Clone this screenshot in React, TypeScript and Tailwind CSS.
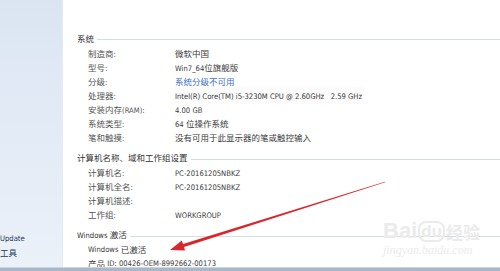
import React from "react";

type Row = { label: string; value?: string; blue?: boolean };

const systemRows: Row[] = [
  { label: "制造商:", value: "微软中国" },
  { label: "型号:", value: "Win7_64位旗舰版" },
  { label: "分级:", value: "系统分级不可用", blue: true },
  { label: "处理器:", value: "Intel(R) Core(TM) i5-3230M CPU @ 2.60GHz   2.59 GHz" },
  { label: "安装内存(RAM):", value: "4.00 GB" },
  { label: "系统类型:", value: "64 位操作系统" },
  { label: "笔和触摸:", value: "没有可用于此显示器的笔或触控输入" },
];

const nameRows: Row[] = [
  { label: "计算机名:", value: "PC-20161205NBKZ" },
  { label: "计算机全名:", value: "PC-20161205NBKZ" },
  { label: "计算机描述:" },
  { label: "工作组:", value: "WORKGROUP" },
];

// latin runs render narrower than the CJK runs in the screenshot
const Txt = ({ text }: { text: string }) => (
  <>
    {text.split(/([\u3000-\u9fff\uff00-\uffef]+)/).map((part, i) =>
      i % 2 === 1 ? (
        <span key={i} className="text-[8.5px]">{part}</span>
      ) : (
        <span
          key={i}
          className="text-[7.6px]"
          style={{ fontFamily: '"Liberation Sans Narrow", "DejaVu Sans Condensed", "Liberation Sans", sans-serif' }}
        >
          {part}
        </span>
      )
    )}
  </>
);

const Header = ({ title, className }: { title: string; className?: string }) => (
  <div className={`flex items-center h-[15px] pl-[14px] ${className ?? ""}`}>
    <span className="text-[#333] whitespace-pre"><Txt text={title} /></span>
    <div className="flex-1 ml-[3px] mt-[3px] border-t border-[#d5dde4]" />
  </div>
);

const InfoRow = ({ row }: { row: Row }) => (
  <div className="flex items-center h-[14px] pl-[25px]">
    <span className="w-[87px] shrink-0 text-[#555] whitespace-pre"><Txt text={row.label} /></span>
    <span className={`whitespace-pre ${row.blue ? "text-[#3d6fcc]" : "text-[#3a3a3a]"}`}>
      {row.value && <Txt text={row.value} />}
    </span>
  </div>
);

export default function App() {
  return (
    <div
      className="relative w-[500px] h-[271px] overflow-hidden flex flex-col bg-white leading-[14px]"
      style={{ fontFamily: '"Liberation Sans", "Noto Sans CJK SC", sans-serif' }}
    >
      <div className="flex flex-1 min-h-0">
        {/* left nav pane */}
        <div className="w-[63px] shrink-0 bg-gradient-to-b from-[#dbe5f2] via-[#e3ebf6] to-[#ebf1f9] border-r border-[#e4ebf4] flex flex-col justify-end pb-[8px] text-[#243a57]">
          <div className="h-[15px] whitespace-nowrap"><Txt text="Update" /></div>
          <div className="h-[15px] whitespace-nowrap"><Txt text="工具" /></div>
        </div>

        {/* main */}
        <div className="flex-1 pt-[30px] overflow-hidden">
          <Header title="系统" className="h-[16px]" />
          {systemRows.map((r) =>
            r.label === "处理器:" ? (
              <div key={r.label} className="flex items-center h-[14px] pl-[25px]">
                <span className="w-[87px] shrink-0 text-[#555]"><Txt text={r.label} /></span>
                <span className="whitespace-pre text-[#3a3a3a] bg-[#fbfbfb] pr-[2px]"><Txt text={r.value ?? ""} /></span>
              </div>
            ) : (
              <InfoRow key={r.label} row={r} />
            )
          )}

          <Header title="计算机名称、域和工作组设置" className="mt-[6px]" />
          {nameRows.map((r) => (
            <InfoRow key={r.label} row={r} />
          ))}

          <Header title="Windows 激活" className="mt-[6px]" />
          <div className="h-[15px] flex items-center pl-[25px] text-[#3a3a3a] whitespace-pre">
            <Txt text="Windows 已激活" />
          </div>
          <div className="h-[14px] flex items-center pl-[25px] text-[#3a3a3a] whitespace-pre">
            <Txt text="产品 ID: 00426-OEM-8992662-00173" />
          </div>
        </div>
      </div>

      {/* taskbar edge */}
      <div className="h-[4px] shrink-0 bg-[#a8b7c9] border-t border-[#cbd5e0]" />

      {/* red arrow */}
      <svg className="absolute left-0 top-0 pointer-events-none" width="500" height="271">
        <polygon
          points="385.1,182.3 184,246.9 185,250.5 170,250 181.8,240.5 183,243.9 384.9,181.7"
          fill="#d8262a"
        />
      </svg>

      {/* watermark */}
      <div className="absolute left-[383px] top-[220px] pointer-events-none text-[#ebebeb] leading-none">
        <div className="flex items-end gap-[1px] font-bold">
          <span className="text-[22px]">Bai</span>
          <span className="text-[17px] border-[2px] border-[#ebebeb] rounded-[8px] px-[1px]">du</span>
          <span className="text-[17px]">经验</span>
        </div>
        <div className="text-[12px] mt-[2px] italic" style={{ fontFamily: '"Liberation Serif", serif' }}>jingyan.baidu.com</div>
      </div>
    </div>
  );
}
